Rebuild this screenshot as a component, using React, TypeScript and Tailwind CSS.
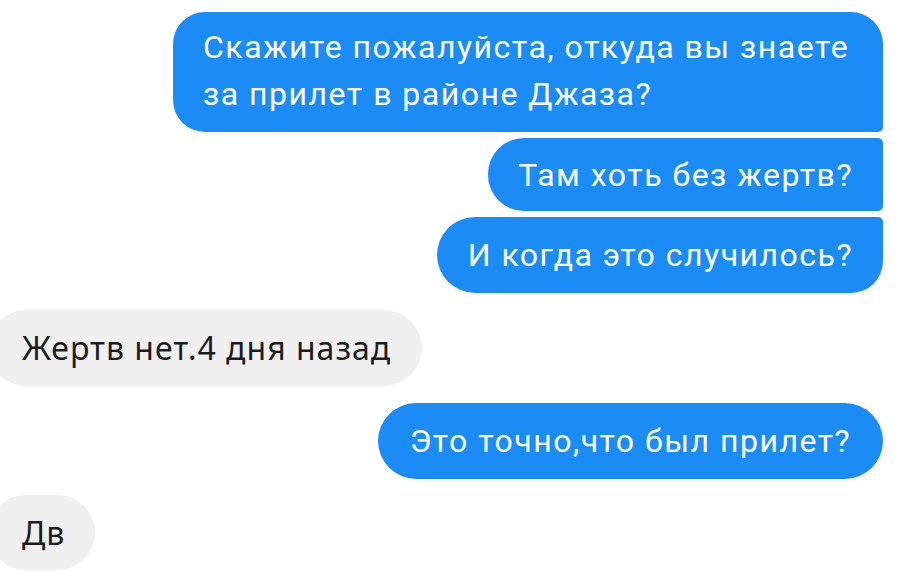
import React from 'react';

const blue = 'bg-[#1b8cf6] text-white text-[32px] tracking-[1.5px]';
const gray = 'bg-[#f0f0f0] text-[#1c1c1c] text-[32px] tracking-[1px] font-["Noto_Sans",sans-serif]';

export default function App() {
  return (
    <div className="w-[900px] h-[578px] overflow-hidden bg-white flex flex-col pt-[12px] pr-[17px] font-['Roboto',sans-serif]">
      {/* outgoing group */}
      <div className="flex flex-col items-end gap-[6px]">
        <div className={`${blue} w-[710px] h-[120px] rounded-[32px] rounded-br-[5px] pl-[30px] pt-[12px] leading-[47px] whitespace-nowrap`}>
          <div>Скажите пожалуйста, откуда вы знаете</div>
          <div>за прилет в районе Джаза?</div>
        </div>
        <div className={`${blue} w-[395px] h-[73px] rounded-l-[36px] rounded-r-[5px] flex items-center justify-end pr-[30px]`}>
          <span className="whitespace-nowrap">Там хоть без жертв?</span>
        </div>
        <div className={`${blue} w-[446px] h-[76px] rounded-l-[38px] rounded-tr-[5px] rounded-br-[32px] flex items-center justify-end pr-[30px]`}>
          <span className="whitespace-nowrap">И когда это случилось?</span>
        </div>
      </div>

      <div className="flex mt-[17px]">
        <div className={`${gray} -ml-[12px] w-[434px] h-[76px] rounded-[38px] flex items-center pl-[34px] whitespace-nowrap`}>
          Жертв нет.4 дня назад
        </div>
      </div>

      <div className="flex justify-end mt-[17px]">
        <div className={`${blue} w-[505px] h-[76px] rounded-[38px] flex items-center justify-center whitespace-nowrap`}>
          Это точно,что был прилет?
        </div>
      </div>

      <div className="flex mt-[16px]">
        <div className={`${gray} -ml-[12px] w-[107px] h-[75px] rounded-[38px] flex items-center pl-[34px]`}>
          Дв
        </div>
      </div>
    </div>
  );
}
